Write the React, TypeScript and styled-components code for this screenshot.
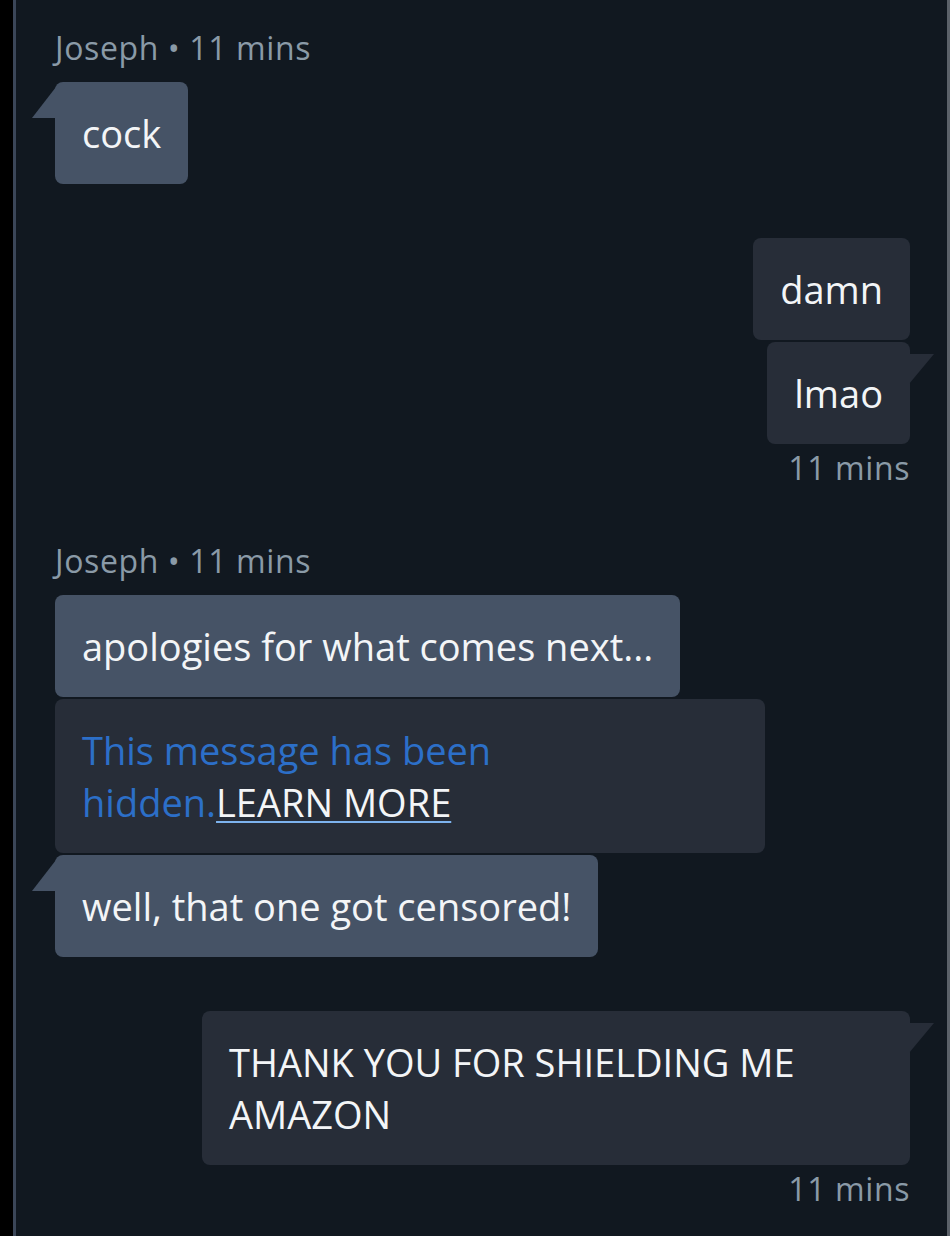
import styled, { createGlobalStyle } from "styled-components";

const GlobalStyle = createGlobalStyle`
  html, body {
    margin: 0;
    padding: 0;
    background: #000;
  }
  body {
    font-family: "Open Sans", "Liberation Sans", sans-serif;
  }
`;

const Frame = styled.div`
  display: flex;
  width: 950px;
  height: 1236px;
  background: #000;
  overflow: hidden;
`;

const Panel = styled.div`
  flex: 1;
  display: flex;
  flex-direction: column;
  margin-left: 13px;
  border-left: 3px solid #3b4658;
  border-right: 3px solid #5b6169;
  background: #111820;
  padding: 31px 37px 0 39px;
`;

const Group = styled.div<{ $mine?: boolean }>`
  display: flex;
  flex-direction: column;
  align-items: ${({ $mine }) => ($mine ? "flex-end" : "flex-start")};
  gap: 2px;
  & + & {
    margin-top: 54px;
  }
`;

const Meta = styled.div<{ $mine?: boolean }>`
  font-size: 32px;
  line-height: 34px;
  letter-spacing: 0.6px;
  color: #8a9aa7;
  margin-bottom: ${({ $mine }) => ($mine ? "5px" : "15px")};
  margin-top: ${({ $mine }) => ($mine ? "5px" : "0")};
`;

const Bubble = styled.div<{ $mine?: boolean; $tail?: boolean }>`
  position: relative;
  max-width: 708px;
  box-sizing: border-box;
  padding: 25px 27px;
  border-radius: 8px;
  font-size: 38px;
  line-height: 52px;
  color: #f3f5f7;
  background: ${({ $mine }) => ($mine ? "#272d38" : "#465366")};

  &::before {
    content: "";
    display: ${({ $tail }) => ($tail ? "block" : "none")};
    position: absolute;
    background: inherit;
    ${({ $mine }) =>
      $mine
        ? `right: -24px; top: 12px; width: 25px; height: 30px;
           clip-path: polygon(0 0, 100% 0, 0 100%);`
        : `left: -23px; top: 5px; width: 24px; height: 31px;
           clip-path: polygon(100% 0, 0 100%, 100% 100%);`}
  }
`;

const Hidden = styled(Bubble)`
  width: 710px;
  max-width: none;
  background: #272d38;
`;

const HiddenText = styled.span`
  color: #2c6fc8;
`;

const LearnMore = styled.a`
  color: #f3f5f7;
  text-decoration: underline;
  text-decoration-color: #7db3ee;
  text-decoration-thickness: 2px;
  text-underline-offset: 4px;
`;

export default function App() {
  return (
    <>
      <GlobalStyle />
      <Frame>
        <Panel>
          <Group>
            <Meta>Joseph • 11 mins</Meta>
            <Bubble $tail>cock</Bubble>
          </Group>

          <Group $mine>
            <Bubble $mine>damn</Bubble>
            <Bubble $mine $tail>
              lmao
            </Bubble>
            <Meta $mine>11 mins</Meta>
          </Group>

          <Group>
            <Meta>Joseph • 11 mins</Meta>
            <Bubble>apologies for what comes next...</Bubble>
            <Hidden>
              <HiddenText>
                This message has been
                <br />
                hidden.
              </HiddenText>
              <LearnMore>LEARN MORE</LearnMore>
            </Hidden>
            <Bubble $tail>well, that one got censored!</Bubble>
          </Group>

          <Group $mine>
            <Bubble $mine $tail>
              THANK YOU FOR SHIELDING ME AMAZON
            </Bubble>
            <Meta $mine>11 mins</Meta>
          </Group>
        </Panel>
      </Frame>
    </>
  );
}
